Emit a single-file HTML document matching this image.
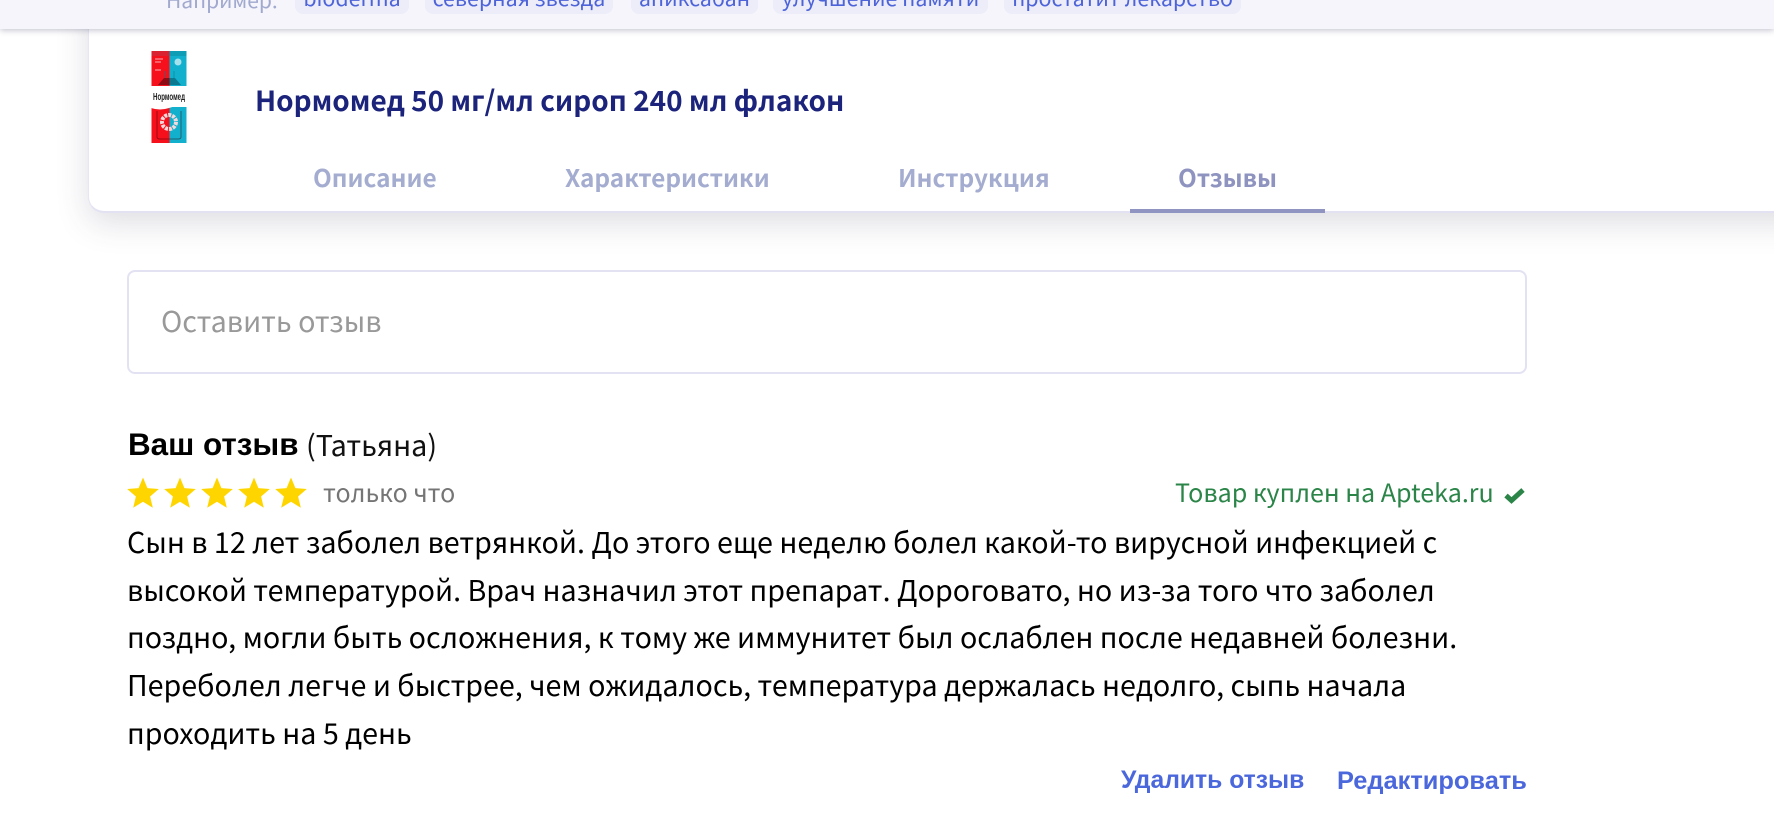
<!DOCTYPE html>
<html lang="ru"><head><meta charset="utf-8"><title>Отзывы</title>
<style>
html,body{margin:0;padding:0;background:#fff;width:1774px;height:839px;overflow:hidden}
body{position:relative;font-family:"Noto Sans CJK SC","Liberation Sans",sans-serif;color:#000}
.a{position:absolute;white-space:nowrap;line-height:1}
.top{position:absolute;left:0;top:0;width:1774px;height:29px;background:#f5f5fb;box-shadow:0 1px 6px rgba(50,50,90,.32);z-index:3}
.chip{position:absolute;top:-10px;height:24px;background:#ededf9;border-radius:8px;color:#4d64d9;font-size:21.4px;line-height:15px;text-align:center;overflow:hidden}
.card{position:absolute;left:88px;top:-20px;width:1750px;height:233px;background:#fff;border:1px solid #e6e6f5;border-bottom:2px solid #e2e2f3;border-radius:16px;box-sizing:border-box;box-shadow:0 10px 32px rgba(60,60,90,.17)}
.tab{position:absolute;top:162px;font-size:24.4px;font-weight:700;color:#a4add0;line-height:32px;white-space:nowrap}
.box{position:absolute;left:127px;top:270px;width:1400px;height:104px;border:2px solid #e2e2f3;border-radius:8px;box-sizing:border-box}
.line{position:absolute;left:128px;font-size:28.65px;line-height:48px;white-space:nowrap;color:#000;margin-left:-1px}
.act{position:absolute;top:765px;font-family:"Liberation Sans",sans-serif;font-weight:700;color:#4b67dc;line-height:32px;white-space:nowrap}
</style></head><body>
<div class="card"></div>
<div class="top">
<span class="a" style="left:166px;top:-12px;font-size:21px;line-height:24px;color:#a1a9cf">Например:</span>
<div class="chip" style="left:295px;width:114px">bioderma</div>
<div class="chip" style="left:425px;width:188px">северная звезда</div>
<div class="chip" style="left:631px;width:127px">апиксабан</div>
<div class="chip" style="left:773px;width:215px">улучшение памяти</div>
<div class="chip" style="left:1004px;width:237px">простатит лекарство</div>
</div>
<svg class="a" style="left:151px;top:51px" width="36" height="92" viewBox="0 0 36 92">
<rect width="36" height="92" fill="#fff"/>
<rect x="0.5" y="0" width="18" height="35" fill="#f5101c"/>
<rect x="18.5" y="0" width="17" height="35" fill="#12b0cc"/>
<rect x="0.5" y="0" width="18" height="5" fill="#d92332"/>
<rect x="18.5" y="0" width="17" height="5" fill="#0f9db6"/>
<path d="M7 34 L13 27 H18.500 V34Z" fill="#8c0b14"/>
<path d="M30 34 L24 27 H18.500 V34Z" fill="#0b7a90"/>
<path d="M14 27V20M23 27V20" stroke="#0b7a90" stroke-width="1" opacity=".6"/>
<path d="M4 8h8M4 11h6M4 19h6" stroke="#f9b0b4" stroke-width="1"/>
<circle cx="27" cy="11" r="3.500" fill="#a6e2ee"/>
<rect x="0.500" y="56" width="18" height="36" fill="#f5101c"/>
<rect x="18.500" y="56" width="17" height="36" fill="#12b0cc"/>
<path d="M0 57 Q9 60 18 57 T36 55 V52 H0Z" fill="#fff"/>
<circle cx="18" cy="71" r="7" fill="none" stroke="#f3d9dc" stroke-width="4" stroke-dasharray="3 1"/>
<path d="M6 60V86Q6 88 9 88H27Q30 88 30 86V60" fill="none" stroke="#300" stroke-width="1" opacity=".45"/>
<text x="18" y="49" text-anchor="middle" font-size="10" font-weight="700" fill="#222" font-family="Liberation Sans,sans-serif" textLength="32" lengthAdjust="spacingAndGlyphs">Нормомед</text>
</svg>
<div class="a" style="left:255px;top:82px;font-size:27.95px;line-height:36px;font-weight:700;color:#1b237b">Нормомед 50 мг/мл сироп 240 мл флакон</div>
<div class="tab" style="left:313px">Описание</div>
<div class="tab" style="left:565px">Характеристики</div>
<div class="tab" style="left:898px">Инструкция</div>
<div class="tab" style="left:1178px;color:#8e94bf">Отзывы</div>
<div class="a" style="left:1130px;top:209px;width:195px;height:4px;background:#9094c0"></div>
<div class="box"></div>
<div class="a" style="left:161px;top:303px;font-size:28.7px;line-height:36px;color:#999">Оставить отзыв</div>
<div class="a" style="left:128px;top:427px;font-family:'Liberation Sans',sans-serif;font-size:31.4px;line-height:36px;font-weight:700">Ваш отзыв</div>
<div class="a" style="left:306px;top:427px;font-size:28.75px;line-height:36px;color:#111">(Татьяна)</div>
<svg class="a" style="left:127px;top:477px" width="182" height="32" viewBox="0 0 182 32" fill="#ffd500">
<path d="M16 0.500l4.400 10.600 11.400.9-8.700 7.500 2.700 11.200L16 24.700l-9.800 6 2.700-11.200L.2 12l11.400-.9z"/>
<path transform="translate(37)" d="M16 0.500l4.400 10.600 11.400.9-8.700 7.500 2.700 11.200L16 24.700l-9.800 6 2.700-11.200L.2 12l11.400-.9z"/>
<path transform="translate(74)" d="M16 0.500l4.400 10.600 11.400.9-8.700 7.500 2.700 11.200L16 24.700l-9.800 6 2.700-11.200L.2 12l11.400-.9z"/>
<path transform="translate(111)" d="M16 0.500l4.400 10.600 11.400.9-8.700 7.500 2.700 11.200L16 24.700l-9.800 6 2.700-11.200L.2 12l11.400-.9z"/>
<path transform="translate(148)" d="M16 0.500l4.400 10.600 11.400.9-8.700 7.500 2.700 11.200L16 24.700l-9.800 6 2.700-11.200L.2 12l11.400-.9z"/>
</svg>
<div class="a" style="left:323px;top:474px;font-size:25px;line-height:36px;color:#757575">только что</div>
<div class="a" style="left:1175px;top:474px;font-size:25.1px;line-height:36px;color:#2b8548">Товар куплен на Apteka.ru</div>
<svg class="a" style="left:1504px;top:487px" width="21" height="17" viewBox="0 0 21 17"><path d="M2 8.500l5.500 5L19 3" fill="none" stroke="#2b8548" stroke-width="5"/></svg>
<div class="line" style="top:518px">Сын в 12 лет заболел ветрянкой. До этого еще неделю болел какой-то вирусной инфекцией с</div>
<div class="line" style="top:566px">высокой температурой. Врач назначил этот препарат. Дороговато, но из-за того что заболел</div>
<div class="line" style="top:613px">поздно, могли быть осложнения, к тому же иммунитет был ослаблен после недавней болезни.</div>
<div class="line" style="top:661px">Переболел легче и быстрее, чем ожидалось, температура держалась недолго, сыпь начала</div>
<div class="line" style="top:709px">проходить на 5 день</div>
<div class="act" style="left:1121px;font-size:24.7px">Удалить отзыв</div>
<div class="act" style="left:1337px;font-size:25.4px">Редактировать</div>
</body></html>
